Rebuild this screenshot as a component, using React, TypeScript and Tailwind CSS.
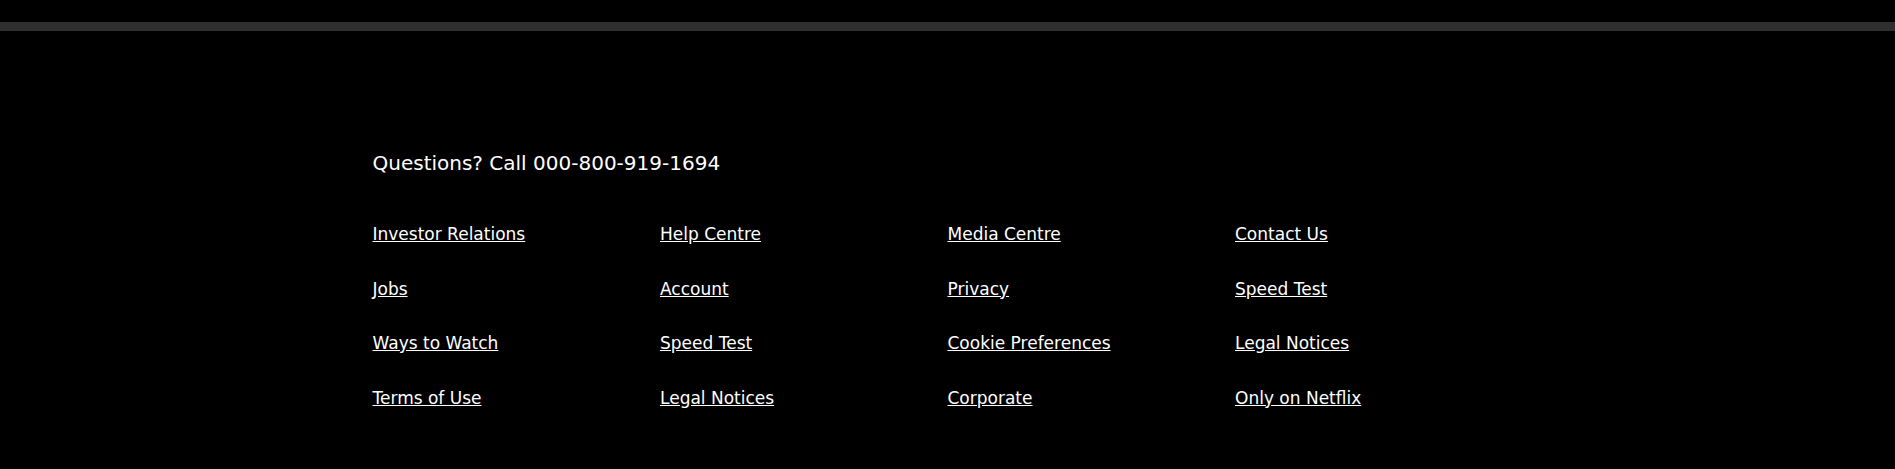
import React from "react";

const columns: string[][] = [
  ["Investor Relations", "Jobs", "Ways to Watch", "Terms of Use"],
  ["Help Centre", "Account", "Speed Test", "Legal Notices"],
  ["Media Centre", "Privacy", "Cookie Preferences", "Corporate"],
  ["Contact Us", "Speed Test", "Legal Notices", "Only on Netflix"],
];

export default function App() {
  return (
    <div
      className="w-full h-[469px] bg-black text-white"
      style={{ fontFamily: "'DejaVu Sans', Inter, sans-serif" }}
    >
      <div className="h-[22px]" />
      <div className="h-[9px] bg-[#2f2f2f]" />
      <div className="w-[1150px] mx-auto pt-[117px]">
        <p className="text-[20px] leading-[30px]">Questions? Call 000-800-919-1694</p>
        <div className="grid grid-cols-4 mt-[44px]">
          {columns.map((col, i) => (
            <div key={i} className="flex flex-col gap-[30.5px]">
              {col.map((l, j) => (
                <a key={j} href="#" className="underline text-[17px] leading-[24px] w-fit">
                  {l}
                </a>
              ))}
            </div>
          ))}
        </div>
      </div>
    </div>
  );
}
